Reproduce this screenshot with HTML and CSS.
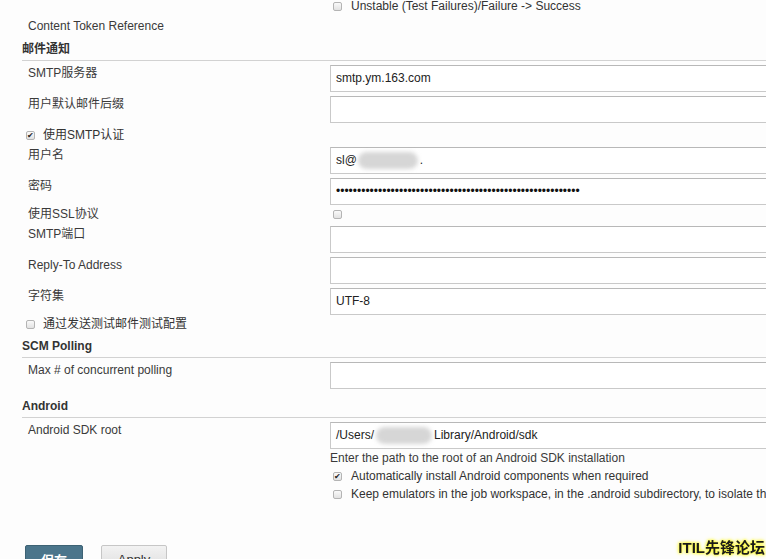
FILE: index.html
```html
<!DOCTYPE html>
<html lang="zh-CN">
  <head>
    <meta charset="UTF-8">
    <title>Configure System</title>
    <link rel="stylesheet" href="styles.css">
  </head>
  <body>
    <div class="page">
      <div class="opt opt-right opt-top"><span class="cb"></span><span>Unstable (Test Failures)/Failure -&gt; Success</span></div>
      <div class="row row-plain"><div class="label">Content Token Reference</div></div>

      <h3 class="section">邮件通知</h3>
      <div class="row"><div class="label">SMTP服务器</div><div class="field">smtp.ym.163.com</div></div>
      <div class="row"><div class="label">用户默认邮件后缀</div><div class="field"></div></div>
      <div class="opt opt-left opt-smtp"><span class="cb checked">✔</span><span>使用SMTP认证</span></div>
      <div class="row"><div class="label">用户名</div><div class="field">sl@<span class="blur blur-mail"></span>.</div></div>
      <div class="row"><div class="label">密码</div><div class="field password">••••••••••••••••••••••••••••••••••••••••••••••••••••••••••</div></div>
      <div class="row row-check"><div class="label">使用SSL协议</div><div class="ctrl"><span class="cb"></span></div></div>
      <div class="row"><div class="label">SMTP端口</div><div class="field"></div></div>
      <div class="row"><div class="label">Reply-To Address</div><div class="field"></div></div>
      <div class="row"><div class="label">字符集</div><div class="field">UTF-8</div></div>
      <div class="opt opt-left opt-test"><span class="cb"></span><span>通过发送测试邮件测试配置</span></div>

      <h3 class="section">SCM Polling</h3>
      <div class="row"><div class="label">Max # of concurrent polling</div><div class="field"></div></div>

      <h3 class="section">Android</h3>
      <div class="row"><div class="label">Android SDK root</div><div class="field">/Users/<span class="blur blur-user"></span>Library/Android/sdk</div></div>
      <div class="help">Enter the path to the root of an Android SDK installation</div>
      <div class="opt opt-right opt-sub"><span class="cb checked">✔</span><span>Automatically install Android components when required</span></div>
      <div class="opt opt-right opt-sub"><span class="cb"></span><span>Keep emulators in the job workspace, in the .android subdirectory, to isolate them from other emulators</span></div>

      <div class="buttons">
        <button class="btn btn-save">保存</button>
        <button class="btn btn-apply">Apply</button>
      </div>
    </div>
    <div class="watermark">ITIL先锋论坛</div>
  </body>
</html>
```
FILE: styles.css
```css
html,
body {
  margin: 0;
  padding: 0;
  overflow: hidden;
  background-color: #fdfdfd;
}

body {
  font-family: 'Liberation Sans', Arial, 'Noto Sans CJK SC', sans-serif;
  font-size: 12px;
  color: #333;
}

.page {
  width: 1100px;
}

.row {
  display: flex;
  padding: 2px 0;
}

.label {
  width: 330px;
  flex: none;
  box-sizing: border-box;
  padding: 1px 0 0 28px;
  line-height: 15px;
  color: #3a3a3a;
}

.row-plain {
  height: 16px;
  padding: 0;
}

.row-check {
  height: 17px;
  padding: 0;
}

.row-check .label {
  padding-top: 0;
}

.row-check .ctrl {
  padding-left: 3px;
  padding-top: 1px;
}

.field {
  flex: 1;
  height: 27px;
  box-sizing: border-box;
  border: 1px solid #c9c9c9;
  border-top-color: #b8b8b8;
  background: #fff;
  padding: 0 5px;
  line-height: 25px;
  color: #222;
  white-space: nowrap;
}

.password {
  color: #111;
}

.blur {
  display: inline-block;
  vertical-align: middle;
  height: 17px;
  background: #d6d6d6;
  border-radius: 9px;
  filter: blur(2px);
}

.blur-mail {
  width: 60px;
  margin: 0 2px 0 1px;
}

.blur-user {
  width: 56px;
  margin: 0 2px 0 2px;
}

.section {
  margin: 7px 0 2px 22px;
  padding-bottom: 3px;
  font-size: 12px;
  line-height: 16px;
  font-weight: bold;
  color: #333;
  border-bottom: 1px solid #d2d2d2;
}

.opt {
  display: flex;
  align-items: center;
  white-space: nowrap;
  line-height: 14px;
}

.opt-left {
  padding-left: 26px;
}

.opt-right {
  padding-left: 333px;
}

.opt-top {
  height: 12px;
  margin-bottom: 6px;
}

.opt-smtp {
  height: 20px;
}

.opt-test {
  height: 14px;
}

.opt-sub {
  height: 14px;
  margin-top: 4px;
}

.cb {
  display: inline-block;
  width: 9px;
  height: 9px;
  box-sizing: border-box;
  border: 1px solid #b4b4b4;
  border-radius: 2px;
  background: linear-gradient(#fafafa, #e2e2e2);
  margin-right: 9px;
  font-size: 8px;
  line-height: 7px;
  text-align: center;
  color: #222;
  overflow: hidden;
}

.opt-left .cb {
  margin-right: 8px;
}

.help {
  padding-left: 330px;
  line-height: 14px;
  color: #3a3a3a;
}

.buttons {
  display: flex;
  gap: 18px;
  margin: 44px 0 0 25px;
}

.btn {
  height: 28px;
  padding: 0;
  font-family: 'Liberation Sans', Arial, 'Noto Sans CJK SC', sans-serif;
  font-size: 13px;
  border-radius: 2px;
  cursor: pointer;
}

.btn-save {
  width: 58px;
  background-color: #4b758b;
  border: 1px solid #3d6274;
  color: #fff;
  font-weight: bold;
}

.btn-apply {
  width: 66px;
  background: linear-gradient(#f2f2f2, #dcdcdc);
  border: 1px solid #c6c6c6;
  color: #333;
}

.watermark {
  position: fixed;
  right: 1px;
  bottom: 2px;
  font-size: 15px;
  line-height: 18px;
  font-weight: bold;
  color: #1a1a1a;
  text-shadow: 0 0 2px #ffff40, 0 0 3px #ffff40, 0 0 4px #fff200;
}
```
